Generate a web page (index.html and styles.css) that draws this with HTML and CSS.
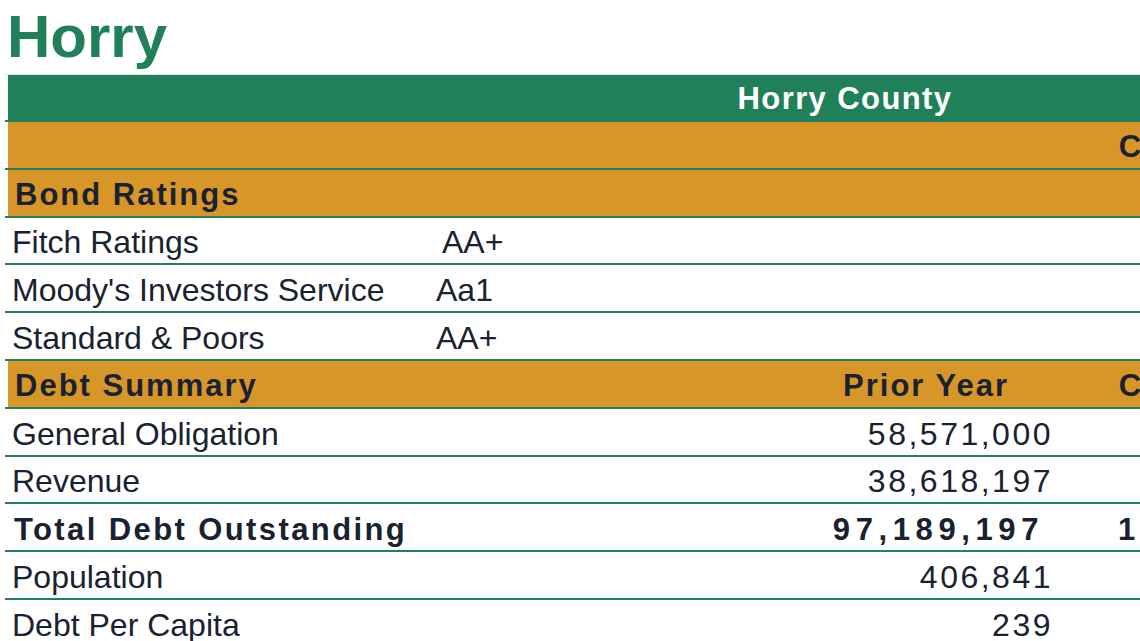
FILE: index.html
```html
<!DOCTYPE html>
<html lang="en">
<head>
<meta charset="utf-8">
<title>Horry</title>
<link rel="stylesheet" href="styles.css">
</head>
<body>
<div class="page">
  <h1 class="title">Horry</h1>
  <div class="sheet">
    <div class="row row-green">
      <div class="cell cell-banner">Horry County</div>
    </div>
    <div class="row row-orange">
      <div class="cell"></div>
      <div class="cell"></div>
      <div class="cell"></div>
      <div class="cell hdr center">Current Year</div>
    </div>
    <div class="row row-orange">
      <div class="cell hdr label-bold">Bond Ratings</div>
    </div>
    <div class="row">
      <div class="cell label">Fitch Ratings</div>
      <div class="cell rating rating-indent">AA+</div>
    </div>
    <div class="row">
      <div class="cell label">Moody's Investors Service</div>
      <div class="cell rating">Aa1</div>
    </div>
    <div class="row">
      <div class="cell label">Standard &amp; Poors</div>
      <div class="cell rating">AA+</div>
    </div>
    <div class="row row-orange">
      <div class="cell hdr label-bold">Debt Summary</div>
      <div class="cell"></div>
      <div class="cell hdr center">Prior Year</div>
      <div class="cell hdr center">Current Year</div>
    </div>
    <div class="row">
      <div class="cell label">General Obligation</div>
      <div class="cell"></div>
      <div class="cell num">58,571,000</div>
    </div>
    <div class="row">
      <div class="cell label">Revenue</div>
      <div class="cell"></div>
      <div class="cell num">38,618,197</div>
    </div>
    <div class="row">
      <div class="cell hdr label-bold total">Total Debt Outstanding</div>
      <div class="cell"></div>
      <div class="cell num num-bold">97,189,197</div>
      <div class="cell num-bold num-cut">1</div>
    </div>
    <div class="row">
      <div class="cell label">Population</div>
      <div class="cell"></div>
      <div class="cell num">406,841</div>
    </div>
    <div class="row">
      <div class="cell label">Debt Per Capita</div>
      <div class="cell"></div>
      <div class="cell num">239</div>
    </div>
  </div>
</div>
</body>
</html>
```
FILE: styles.css
```css
html, body {
  margin: 0;
  padding: 0;
  background: #ffffff;
}

body {
  width: 1140px;
  height: 641px;
  overflow: hidden;
  font-family: "Liberation Sans", Arial, sans-serif;
  color: #182231;
}

.page {
  width: 1140px;
}

.title {
  margin: 0;
  box-sizing: border-box;
  height: 74px;
  padding: 7px 0 0 7px;
  font-size: 60px;
  line-height: 1;
  font-weight: 700;
  color: #20805a;
}

.sheet {
  width: 1677px;
  margin-left: 5px;
}

.row {
  display: grid;
  grid-template-columns: 427px 363px 256px 339px 1fr;
  height: 45.8px;
  padding-left: 3px;
  border-bottom: 2px solid #20805a;
  background-clip: content-box;
}

.row-green {
  height: 45px;
  border-top: 1px solid #dfe5e2;
  background-color: #20805a;
}

.row-orange {
  background-color: #d99628;
}

.cell {
  display: flex;
  align-items: center;
  box-sizing: border-box;
  padding-top: 5px;
  font-size: 32px;
  white-space: nowrap;
  min-width: 0;
}

.cell-banner {
  grid-column: 1 / -1;
  justify-content: center;
  padding-top: 2px;
  font-size: 31px;
  color: #ffffff;
  font-weight: 700;
  letter-spacing: 1.4px;
}

.hdr {
  font-size: 31px;
  font-weight: 700;
  letter-spacing: 2px;
}

.label {
  padding-left: 4px;
}

.label-bold {
  padding-left: 7px;
}

.total {
  padding-left: 6px;
  letter-spacing: 2.4px;
}

.center {
  justify-content: center;
}

.rating {
  padding-left: 1px;
}

.rating-indent {
  padding-left: 7px;
}

.num {
  justify-content: flex-end;
  letter-spacing: 2.5px;
  padding-right: 1px;
}

.num-bold {
  font-size: 31px;
  font-weight: 700;
  letter-spacing: 5.6px;
  padding-right: 10px;
}

.num-cut {
  justify-content: flex-start;
  padding-left: 64px;
}
```
